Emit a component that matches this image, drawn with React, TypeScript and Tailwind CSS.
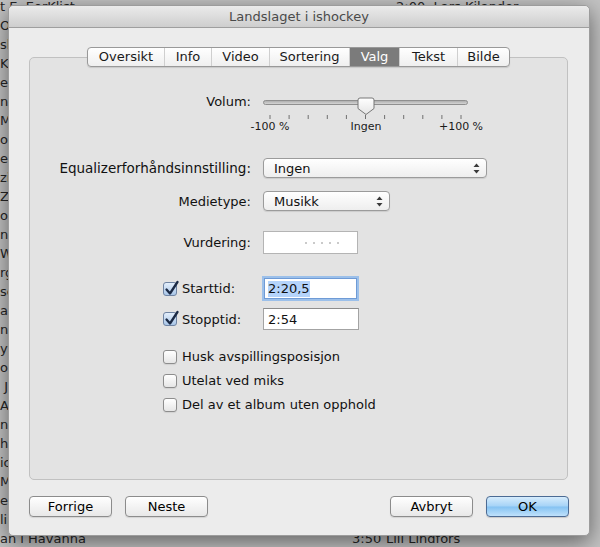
import React from 'react';

const tabs = [
  { label: 'Oversikt', w: 'w-[76px]' },
  { label: 'Info', w: 'w-[47px]' },
  { label: 'Video', w: 'w-[58px]' },
  { label: 'Sortering', w: 'w-[80px]' },
  { label: 'Valg', w: 'w-[50px]', active: true },
  { label: 'Tekst', w: 'w-[58px]' },
  { label: 'Bilde', w: 'w-[52px]' },
];

// rows of the iTunes list behind the dialog
const listRows = [
  't E  EorKlist', 'O', 'sb', 'Ke', 'et', 'ng', 'M', 'oo', 'ed', 'zi', 'Ze', 'oo', 'ng', 'W',
  'rg', 'se', 'aw', 'ne', 'yy', 'or', ' J', 'A', 'n', 'ha', 'ic', 'My', 'ers', 'lin',
];

function SelectArrows() {
  return (
    <svg width="7" height="11" viewBox="0 0 7 11">
      <polygon points="3.5,0.5 6.5,4 0.5,4" fill="#3a3a3a" />
      <polygon points="0.5,7 6.5,7 3.5,10.5" fill="#3a3a3a" />
    </svg>
  );
}

function Select({ value, className }: { value: string; className: string }) {
  return (
    <div
      className={`flex h-[20px] items-center justify-between rounded-[4px] border border-[#9b9b9b] bg-gradient-to-b from-white to-[#eeeeee] pl-[10px] pr-[6px] shadow-[0_1px_1px_rgba(0,0,0,0.1)] ${className}`}
    >
      <span className="leading-none">{value}</span>
      <SelectArrows />
    </div>
  );
}

function Checkbox({ checked }: { checked?: boolean }) {
  if (checked) {
    return (
      <div className="relative h-[14px] w-[14px] shrink-0 rounded-[3px] border border-[#6f84a3] bg-gradient-to-b from-[#e3eefb] to-[#a9c6e8]">
        <svg className="absolute -left-[1px] -top-[3px]" width="17" height="17" viewBox="0 0 17 17">
          <path d="M3.5 9.5 L7 13.5 L14.5 2" fill="none" stroke="#1b2a45" strokeWidth="2.3" strokeLinecap="round" strokeLinejoin="round" />
        </svg>
      </div>
    );
  }
  return (
    <div className="h-[14px] w-[14px] shrink-0 rounded-[3px] border border-[#8d8d8d] bg-gradient-to-b from-white to-[#e6e6e6] shadow-[0_1px_1px_rgba(0,0,0,0.08)]" />
  );
}

function Button({ label, primary }: { label: string; primary?: boolean }) {
  return (
    <button
      className={
        primary
          ? 'h-[21px] w-[83px] rounded-[4px] border border-[#4c6b94] bg-[linear-gradient(to_bottom,#d6ecfc_0%,#a6d3f7_48%,#84c2f2_52%,#bfe1fb_100%)] text-[13px] leading-none text-black shadow-[0_1px_1px_rgba(0,0,0,0.15)]'
          : 'h-[21px] w-[83px] rounded-[4px] border border-[#8c8c8c] bg-gradient-to-b from-white to-[#e8e8e8] text-[13px] leading-none text-black shadow-[0_1px_1px_rgba(0,0,0,0.1)]'
      }
    >
      {label}
    </button>
  );
}

function VolumeSlider() {
  const ticks = Array.from({ length: 11 }, (_, i) => 7 + i * 19.1);
  return (
    <div className="w-[205px]">
      <svg width="205" height="22" viewBox="0 0 205 22">
        <defs>
          <linearGradient id="track" x1="0" y1="0" x2="0" y2="1">
            <stop offset="0" stopColor="#a9a9a9" />
            <stop offset="1" stopColor="#dadada" />
          </linearGradient>
          <linearGradient id="knob" x1="0" y1="0" x2="0" y2="1">
            <stop offset="0" stopColor="#ffffff" />
            <stop offset="1" stopColor="#e4e4e4" />
          </linearGradient>
        </defs>
        <rect x="0.5" y="3.5" width="204" height="4" rx="2" fill="url(#track)" stroke="#8f8f8f" />
        {ticks.map((x) => (
          <line key={x} x1={x} y1="18" x2={x} y2="22" stroke="#707070" strokeWidth="1" />
        ))}
        <path d="M97 1 H109 Q111 1 111 3 V11.5 L103 17.5 L95 11.5 V3 Q95 1 97 1 Z" fill="url(#knob)" stroke="#777777" />
      </svg>
      <div className="relative mt-[2px] h-[12px] text-[11px] leading-[12px] text-[#1a1a1a]">
        <span className="absolute left-[7px] -translate-x-1/2 whitespace-nowrap">-100 %</span>
        <span className="absolute left-[103px] -translate-x-1/2 whitespace-nowrap">Ingen</span>
        <span className="absolute left-[198px] -translate-x-1/2 whitespace-nowrap">+100 %</span>
      </div>
    </div>
  );
}

export default function App() {
  return (
    <div className="relative h-[547px] w-[600px] overflow-hidden bg-[#c3c3c3] font-['DejaVu_Sans',sans-serif] text-[13px] text-[#111]">
      {/* list behind the dialog */}
      <div className="-mt-[3px] text-[#262626]">
        {listRows.map((r, i) => (
          <div key={i} className="flex h-[19px] items-center whitespace-pre">
            <span className="w-[396px]">{r}</span>
            {i === 0 && <span>2:00  Lars Kilander</span>}
          </div>
        ))}
        <div className="flex h-[19px] items-center whitespace-pre">
          <span className="w-[352px]">an i Havanna</span>
          <span className="w-[34px]">3:50</span>
          <span>Lill Lindfors</span>
        </div>
      </div>

      {/* dialog */}
      <div className="absolute left-[8px] top-[5px] flex h-[531px] w-[582px] flex-col rounded-[5px] border border-[#9c9c9c] bg-[#ececec] shadow-[0_6px_22px_rgba(0,0,0,0.5)]">
        <div className="flex h-[22px] shrink-0 items-center justify-center rounded-t-[5px] border-b border-[#9f9f9f] bg-gradient-to-b from-[#ebebeb] to-[#cecece] text-[13px] text-[#4a4a4a]">
          Landslaget i ishockey
        </div>

        <div className="ml-[20px] mt-[29px] h-[423px] w-[539px] shrink-0 rounded-[5px] border border-[#c1c1c1] bg-[#e3e3e3]">
          {/* tabs */}
          <div className="-mt-[11px] flex justify-center">
            <div className="flex h-[20px] overflow-hidden rounded-[4px] border border-[#999999] bg-gradient-to-b from-white to-[#efefef] shadow-[0_1px_1px_rgba(0,0,0,0.12)]">
              {tabs.map((t, i) => (
                <div
                  key={t.label}
                  className={`flex items-center justify-center ${t.w} ${i > 0 ? 'border-l border-[#cfcfcf]' : ''} ${
                    t.active ? 'bg-[#7b7b7b] text-white' : 'text-[#1a1a1a]'
                  }`}
                >
                  {t.label}
                </div>
              ))}
            </div>
          </div>

          {/* volume */}
          <div className="mt-[30px] flex">
            <div className="-mt-[3px] w-[221px] text-right leading-[16px]">Volum:</div>
            <div className="ml-[12px]">
              <VolumeSlider />
            </div>
          </div>

          <div className="mt-[25px] flex items-center">
            <div className="w-[221px] whitespace-nowrap text-right text-[13.5px]">Equalizerforhåndsinnstilling:</div>
            <div className="ml-[12px]">
              <Select value="Ingen" className="w-[224px]" />
            </div>
          </div>

          <div className="mt-[13px] flex items-center">
            <div className="w-[221px] text-right">Medietype:</div>
            <div className="ml-[12px]">
              <Select value="Musikk" className="w-[127px]" />
            </div>
          </div>

          <div className="mt-[20px] flex items-center">
            <div className="w-[221px] text-right">Vurdering:</div>
            <div className="ml-[12px] flex h-[23px] w-[95px] items-center gap-[6px] border border-[#b4b4b4] bg-white pl-[41px]">
              {[0, 1, 2, 3, 4].map((d) => (
                <div key={d} className="h-[2px] w-[2px] rounded-full bg-[#b9b9b9]" />
              ))}
            </div>
          </div>

          <div className="mt-[24px] flex items-center pl-[133px]">
            <div className="flex w-[88px] items-center gap-[5px]">
              <Checkbox checked />
              <span>Starttid:</span>
            </div>
            <div className="ml-[13px] flex h-[21px] w-[93px] items-center border border-[#6f9bd6] bg-white pl-[3px] shadow-[0_0_0_2px_#9cc0ea]">
              <span className="bg-[#b5d4fb] leading-[16px]">2:20,5</span>
            </div>
          </div>

          <div className="mt-[9px] flex items-center pl-[133px]">
            <div className="flex w-[88px] items-center gap-[5px]">
              <Checkbox checked />
              <span>Stopptid:</span>
            </div>
            <div className="ml-[12px] flex h-[22px] w-[96px] items-center border border-[#a3a3a3] border-t-[#8c8c8c] bg-white pl-[4px]">
              2:54
            </div>
          </div>

          <div className="mt-[17px] flex flex-col gap-[5px] pl-[133px]">
            {['Husk avspillingsposisjon', 'Utelat ved miks', 'Del av et album uten opphold'].map((l) => (
              <div key={l} className="flex h-[19px] items-center gap-[5px]">
                <Checkbox />
                <span>{l}</span>
              </div>
            ))}
          </div>
        </div>

        {/* buttons */}
        <div className="mt-[16px] flex px-[20px]">
          <div className="flex gap-[13px]">
            <Button label="Forrige" />
            <Button label="Neste" />
          </div>
          <div className="ml-auto flex gap-[13px]">
            <Button label="Avbryt" />
            <Button label="OK" primary />
          </div>
        </div>
      </div>
    </div>
  );
}
